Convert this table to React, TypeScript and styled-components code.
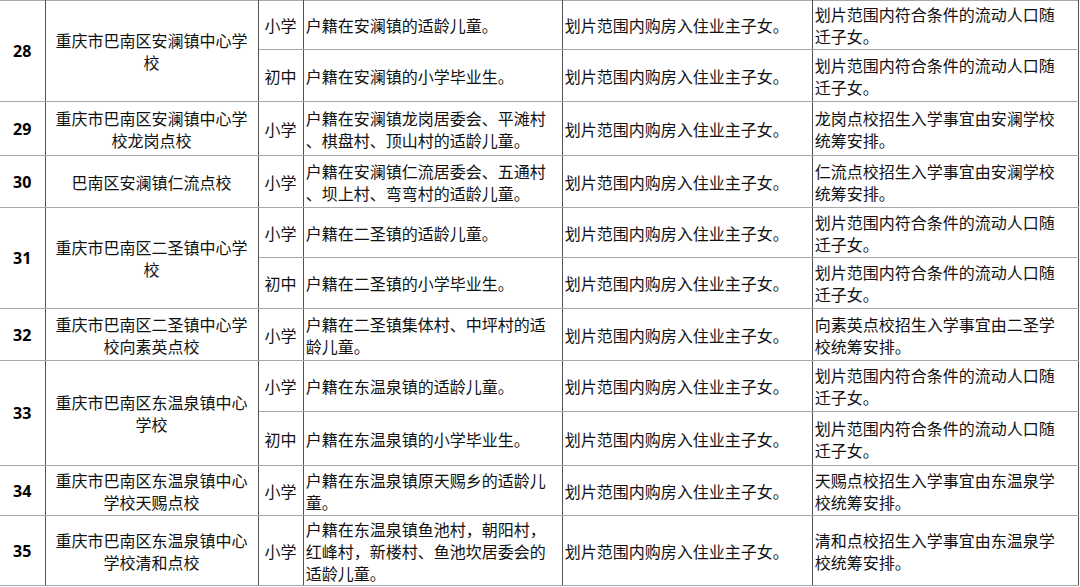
import styled, { createGlobalStyle } from 'styled-components'

const GlobalStyle = createGlobalStyle`
  html, body {
    margin: 0;
    padding: 0;
    background: #ffffff;
    overflow: hidden;
  }
`

const widths = [45, 213, 45, 259, 250, 266]

type Sub = {
  level: string
  scope: string
  h: number
}

type School = {
  no: number
  name: string
  subs: Sub[]
  note: string
}

const BUY = '划片范围内购房入住业主子女。'
const FLOW = '划片范围内符合条件的流动人口随\n迁子女。'

const schools: School[] = [
  {
    no: 28,
    name: '重庆市巴南区安澜镇中心学\n校',
    subs: [
      { level: '小学', scope: '户籍在安澜镇的适龄儿童。', h: 49 },
      { level: '初中', scope: '户籍在安澜镇的小学毕业生。', h: 52 },
    ],
    note: FLOW,
  },
  {
    no: 29,
    name: '重庆市巴南区安澜镇中心学\n校龙岗点校',
    subs: [{ level: '小学', scope: '户籍在安澜镇龙岗居委会、平滩村\n、棋盘村、顶山村的适龄儿童。', h: 54 }],
    note: '龙岗点校招生入学事宜由安澜学校\n统筹安排。',
  },
  {
    no: 30,
    name: '巴南区安澜镇仁流点校',
    subs: [{ level: '小学', scope: '户籍在安澜镇仁流居委会、五通村\n、坝上村、弯弯村的适龄儿童。', h: 52 }],
    note: '仁流点校招生入学事宜由安澜学校\n统筹安排。',
  },
  {
    no: 31,
    name: '重庆市巴南区二圣镇中心学\n校',
    subs: [
      { level: '小学', scope: '户籍在二圣镇的适龄儿童。', h: 50 },
      { level: '初中', scope: '户籍在二圣镇的小学毕业生。', h: 51 },
    ],
    note: FLOW,
  },
  {
    no: 32,
    name: '重庆市巴南区二圣镇中心学\n校向素英点校',
    subs: [{ level: '小学', scope: '户籍在二圣镇集体村、中坪村的适\n龄儿童。', h: 52 }],
    note: '向素英点校招生入学事宜由二圣学\n校统筹安排。',
  },
  {
    no: 33,
    name: '重庆市巴南区东温泉镇中心\n学校',
    subs: [
      { level: '小学', scope: '户籍在东温泉镇的适龄儿童。', h: 51 },
      { level: '初中', scope: '户籍在东温泉镇的小学毕业生。', h: 54 },
    ],
    note: FLOW,
  },
  {
    no: 34,
    name: '重庆市巴南区东温泉镇中心\n学校天赐点校',
    subs: [{ level: '小学', scope: '户籍在东温泉镇原天赐乡的适龄儿\n童。', h: 50 }],
    note: '天赐点校招生入学事宜由东温泉学\n校统筹安排。',
  },
  {
    no: 35,
    name: '重庆市巴南区东温泉镇中心\n学校清和点校',
    subs: [
      {
        level: '小学',
        scope: '户籍在东温泉镇鱼池村，朝阳村，\n红峰村，新楼村、鱼池坎居委会的\n适龄儿童。',
        h: 70,
      },
    ],
    note: '清和点校招生入学事宜由东温泉学\n校统筹安排。',
  },
]

const Sheet = styled.table`
  border-collapse: collapse;
  table-layout: fixed;
  width: ${widths.reduce((a, b) => a + b, 0) + 1}px;
  font-family: 'Noto Sans CJK SC', 'Noto Sans', sans-serif;
  font-size: 16px;
  line-height: 22px;
  color: #111111;
`

const Row = styled.tr<{ $h: number }>`
  height: ${(p) => p.$h}px;
`

const Cell = styled.td<{ $align?: 'left' | 'center'; $first?: boolean; $top?: boolean }>`
  padding: 0 2px;
  vertical-align: middle;
  text-align: ${(p) => p.$align ?? 'center'};
  white-space: pre-line;
  overflow: hidden;
  border-bottom: 1px solid #a8a8a8;
  border-top: ${(p) => (p.$top ? '1px solid #a8a8a8' : 'none')};
  border-right: 1px solid #505050;
  border-left: ${(p) => (p.$first ? 'none' : '1px solid #505050')};
`

const NumCell = styled(Cell)`
  font-family: 'Open Sans', 'Noto Sans', sans-serif;
  font-weight: 700;
  font-size: 16px;
  color: #000000;
`

const LevelCell = styled(Cell)`
  padding: 0;
`

export default function App() {
  return (
    <>
      <GlobalStyle />
      <Sheet>
        <colgroup>
          {widths.map((w, i) => (
            <col key={i} style={{ width: w }} />
          ))}
        </colgroup>
        <tbody>
          {schools.flatMap((s, si) =>
            s.subs.map((sub, i) => {
              const top = si === 0 && i === 0
              return (
                <Row key={`${s.no}-${i}`} $h={sub.h}>
                  {i === 0 && (
                    <>
                      <NumCell rowSpan={s.subs.length} $first $top={top}>
                        {s.no}
                      </NumCell>
                      <Cell rowSpan={s.subs.length} $top={top}>
                        {s.name}
                      </Cell>
                    </>
                  )}
                  <LevelCell $top={top}>{sub.level}</LevelCell>
                  <Cell $align='left' $top={top}>
                    {sub.scope}
                  </Cell>
                  <Cell $align='left' $top={top}>
                    {BUY}
                  </Cell>
                  <Cell $align='left' $top={top}>
                    {s.note}
                  </Cell>
                </Row>
              )
            }),
          )}
        </tbody>
      </Sheet>
    </>
  )
}
